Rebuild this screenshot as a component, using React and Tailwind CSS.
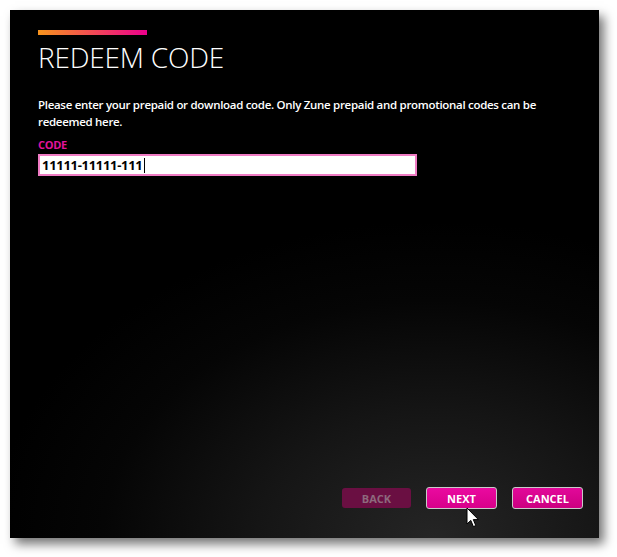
import React from "react";

function Cursor() {
  return (
    <svg
      className="absolute left-[466px] top-[507px]"
      width="14"
      height="22"
      viewBox="0 0 14 22"
    >
      <path
        d="M1 1 L1 17 L4.8 13.4 L7.4 19.6 L9.8 18.6 L7.3 12.6 L12.4 12.6 Z"
        fill="#fff"
        stroke="#000"
        strokeWidth="1"
        strokeLinejoin="miter"
      />
    </svg>
  );
}

export default function App() {
  return (
    <div className="relative w-[617px] h-[557px] bg-white pt-[10px] pl-[10px] overflow-hidden">
      <div
        className="w-[589px] h-[528px] flex flex-col pl-[28px] pr-[16px] pt-[20px] pb-[29px] shadow-[5px_6px_10px_rgba(0,0,0,0.55)] bg-[radial-gradient(ellipse_75%_60%_at_72%_100%,#252525_0%,#151515_40%,#050505_75%,#000_100%)]"
        style={{ fontFamily: '"Open Sans", "Liberation Sans", sans-serif' }}
      >
        <div className="w-[109px] h-[5px] bg-[linear-gradient(to_right,#f7941d,#ec008c)]" />
        <h1 className="mt-[5px] text-[28px] leading-[34px] font-light text-white tracking-[-0.2px]">
          REDEEM CODE
        </h1>
        <p className="mt-[22px] w-[530px] text-[11.5px] leading-[17px] font-semibold text-white tracking-[-0.3px]">
          Please enter your prepaid or download code. Only Zune prepaid and promotional codes can be redeemed here.
        </p>
        <div className="mt-[8px] text-[11px] leading-[14px] font-bold text-[#e3139b] tracking-[-0.3px]">
          CODE
        </div>
        <div className="mt-[2px] w-[379px] h-[22px] bg-white border-2 border-[#f07cc4] flex items-center pl-[2px]">
          <span className="text-[13px] leading-[18px] font-bold text-black tracking-[-0.3px]">
            11111-11111-111
          </span>
          <span className="ml-[1px] w-[1px] h-[15px] bg-black" />
        </div>
        <div className="flex-1" />
        <div className="flex justify-end gap-[15px]">
          <button className="w-[69px] h-[20px] mt-[1px] rounded-[3px] bg-[#6a0f42] text-[11px] font-bold text-[#8d6a7d] leading-none">
            BACK
          </button>
          <button className="w-[71px] h-[22px] rounded-[3px] border border-[#c9c9c9] bg-[linear-gradient(to_bottom,#ea0aa0,#d8008a)] text-[11px] font-bold text-white leading-none">
            NEXT
          </button>
          <button className="w-[71px] h-[22px] rounded-[3px] border border-[#c9c9c9] bg-[linear-gradient(to_bottom,#e2089a,#cc0080)] text-[11px] font-bold text-white leading-none">
            CANCEL
          </button>
        </div>
      </div>
      <Cursor />
    </div>
  );
}
